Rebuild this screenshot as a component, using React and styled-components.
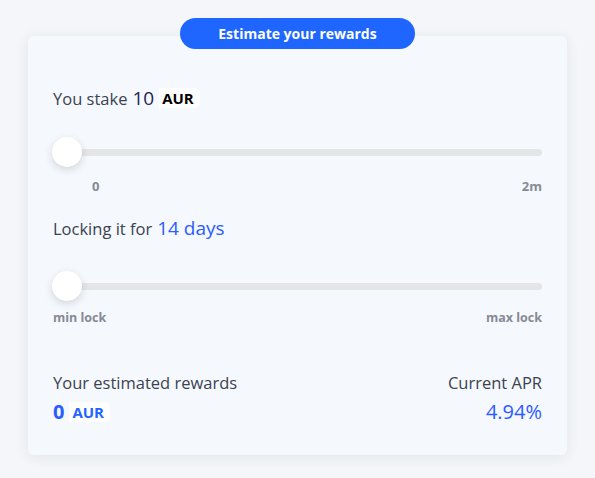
import styled, { createGlobalStyle } from 'styled-components'

const GlobalStyle = createGlobalStyle`
  html, body {
    margin: 0;
    padding: 0;
    background: #f4f6f9;
    font-family: 'Open Sans', 'Lato', sans-serif;
  }
`

const Page = styled.div`
  width: 595px;
  height: 478px;
  padding: 18px 0 0 28px;
  box-sizing: border-box;
  position: relative;
`

const Card = styled.section`
  width: 539px;
  height: 419px;
  margin-top: 18px;
  box-sizing: border-box;
  padding: 50px 25px 0 25px;
  background: #f5f8fc;
  border-radius: 6px;
  box-shadow: 0 2px 14px rgba(40, 50, 80, 0.09);
  display: flex;
  flex-direction: column;
`

const TitlePill = styled.div`
  position: absolute;
  top: 18px;
  left: 180px;
  width: 235px;
  height: 31px;
  border-radius: 16px;
  background: #1e66ff;
  color: #fff;
  font-weight: 700;
  font-size: 14px;
  display: flex;
  align-items: center;
  justify-content: center;
`

const Line = styled.div`
  display: flex;
  align-items: center;
  height: 24px;
  font-size: 16.5px;
  color: #3b4250;
  gap: 5px;
  margin-top: ${({ $top }) => $top || 0}px;
`

const Amount = styled.span`
  font-size: 19px;
  color: ${({ $blue }) => ($blue ? '#2b5cff' : '#1e2553')};
`

const Token = styled.span`
  background: #fff;
  font-weight: 700;
  font-size: 15px;
  color: ${({ $blue }) => ($blue ? '#1e66ff' : '#000')};
  padding: 0 6px 0 3px;
  border-radius: 0 6px 6px 0;
`

const Track = styled.div`
  position: relative;
  height: 7px;
  border-radius: 4px;
  background: #e4e5e7;
  margin-top: ${({ $top }) => $top}px;
`

const Thumb = styled.div`
  position: absolute;
  left: -1px;
  top: -12px;
  width: 30px;
  height: 30px;
  border-radius: 50%;
  background: #fff;
  box-shadow: 0 3px 8px rgba(0, 0, 0, 0.14);
`

const Scale = styled.div`
  display: flex;
  justify-content: space-between;
  padding-left: ${({ $pad }) => $pad || 0}px;
  margin-top: ${({ $top }) => $top}px;
  font-size: ${({ $size }) => $size}px;
  font-weight: 700;
  color: #868a95;
`

const Results = styled.div`
  display: flex;
  justify-content: space-between;
  margin-top: 45px;
`

const Col = styled.div`
  display: flex;
  flex-direction: column;
  align-items: ${({ $right }) => ($right ? 'flex-end' : 'flex-start')};
  gap: 4px;
`

const Label = styled.div`
  font-size: 16.5px;
  color: #3b4250;
`

const Value = styled.div`
  display: flex;
  align-items: center;
  gap: 5px;
  font-size: 20px;
  color: #2b5cff;
  font-weight: ${({ $bold }) => ($bold ? 700 : 400)};
`

export default function App() {
  return (
    <Page>
      <GlobalStyle />
      <TitlePill>Estimate your rewards</TitlePill>
      <Card>
        <Line>
          You stake <Amount>10</Amount>
          <Token>AUR</Token>
        </Line>
        <Track $top={39}>
          <Thumb />
        </Track>
        <Scale $pad={39} $top={21} $size={13}>
          <span>0</span>
          <span>2m</span>
        </Scale>
        <Line $top={21}>
          Locking it for <Amount $blue>14 days</Amount>
        </Line>
        <Track $top={43}>
          <Thumb />
        </Track>
        <Scale $top={19} $size={12.5}>
          <span>min lock</span>
          <span>max lock</span>
        </Scale>
        <Results>
          <Col>
            <Label>Your estimated rewards</Label>
            <Value $bold>
              0<Token $blue>AUR</Token>
            </Value>
          </Col>
          <Col $right>
            <Label>Current APR</Label>
            <Value>4.94%</Value>
          </Col>
        </Results>
      </Card>
    </Page>
  )
}
